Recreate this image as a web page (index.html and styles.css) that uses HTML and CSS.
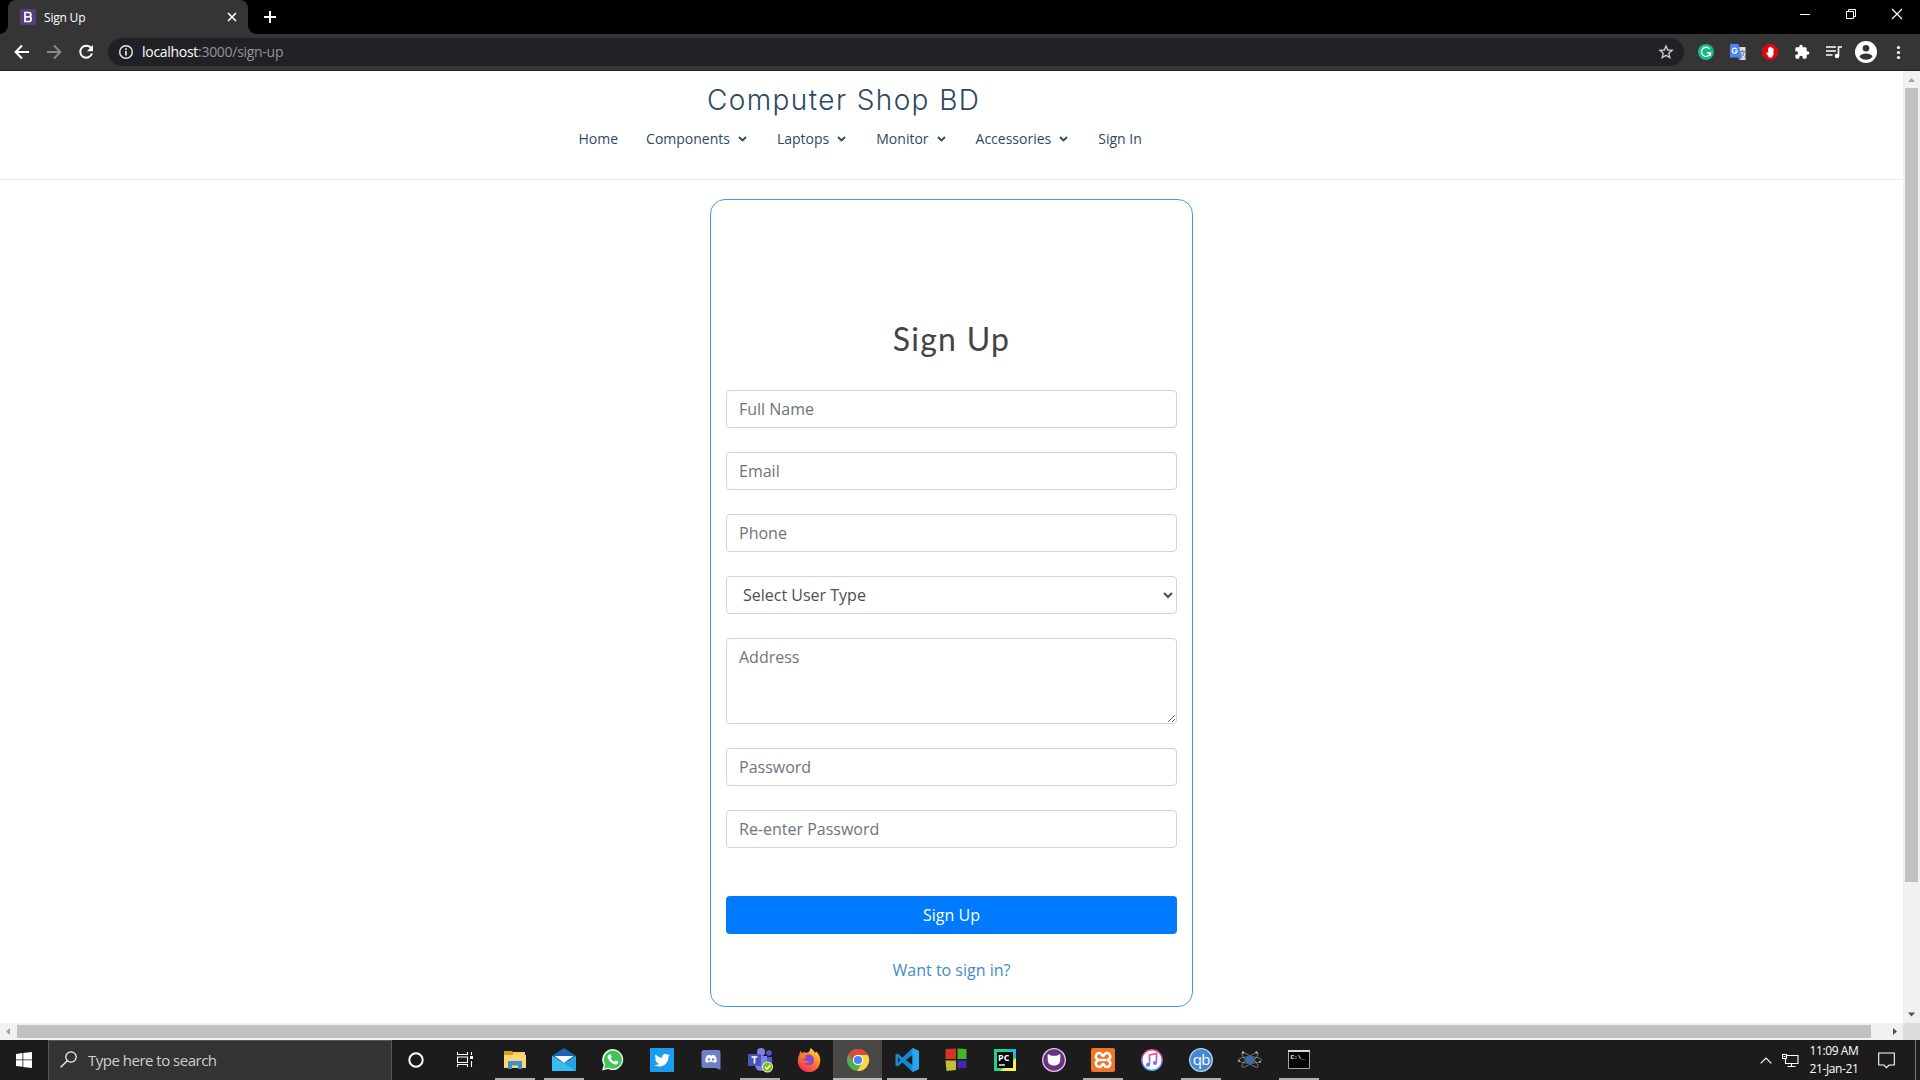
FILE: index.html
```html
<!DOCTYPE html>
<html lang="en">
<head>
<meta charset="utf-8">
<title>Sign Up</title>
<link rel="stylesheet" href="styles.css">
</head>
<body>
<div class="tabstrip">
  <div class="tab">
    <svg class="favicon" width="16" height="16" viewBox="0 0 16 16"><rect width="16" height="16" rx="2" fill="#563d7c"/><path d="M5 3.5h3.6a2.1 2.1 0 0 1 .3 4.2 2.4 2.4 0 0 1-.2 4.8H5zM5 7.8h3.6" fill="none" stroke="#fff" stroke-width="1.7"/></svg>
    <span class="tab-title">Sign Up</span>
    <svg width="10" height="10" viewBox="0 0 10 10"><path d="M1 1l8 8M9 1L1 9" stroke="#fff" stroke-width="1.7"/></svg>
  </div>
  <svg class="newtab" width="12" height="12" viewBox="0 0 12 12"><path d="M6 0v12M0 6h12" stroke="#fff" stroke-width="2"/></svg>
  <div class="window-controls">
    <svg width="46" height="28" viewBox="0 0 46 28"><path d="M18 14.5h10" stroke="#fff"/></svg>
    <svg width="46" height="28" viewBox="0 0 46 28"><path d="M18.500 11.500h7v7h-7zM20.500 11v-1.500h7v7h-1.500" fill="none" stroke="#fff"/></svg>
    <svg width="46" height="28" viewBox="0 0 46 28"><path d="M18 9l10 10M28 9L18 19" stroke="#fff" stroke-width="1.200"/></svg>
  </div>
</div>
<div class="toolbar">
  <div class="nav-buttons">
    <svg width="16" height="16" viewBox="0 0 16 16"><path d="M15 8H2M8 1.500L1.600 8 8 14.500" fill="none" stroke="#fff" stroke-width="2"/></svg>
    <svg width="16" height="16" viewBox="0 0 16 16"><path d="M1 8h13M8 1.500L14.400 8 8 14.500" fill="none" stroke="#898989" stroke-width="2"/></svg>
    <svg width="16" height="16" viewBox="0 0 16 16"><path d="M13.200 4.200A6 6 0 1 0 14 9.500" fill="none" stroke="#fff" stroke-width="2"/><path d="M15 1v6.200H8.800z" fill="#fff"/></svg>
  </div>
  <div class="omnibox">
    <svg width="16" height="16" viewBox="0 0 16 16"><circle cx="8" cy="8" r="6.300" fill="none" stroke="#e8eaed" stroke-width="1.400"/><path d="M8 7v4.500M8 4.300v1.600" stroke="#e8eaed" stroke-width="1.700"/></svg>
    <span class="url"><b>localhost</b>:3000/sign-up</span>
    <svg width="16" height="16" viewBox="0 0 16 16"><path d="M8 2l1.700 4 4.400.400-3.300 2.900 1 4.300L8 11.300l-3.800 2.300 1-4.300L1.900 6.400 6.300 6z" fill="none" stroke="#c8cacd" stroke-width="1.400"/></svg>
  </div>
  <div class="extensions">
    <svg width="16" height="16" viewBox="0 0 16 16"><circle cx="8" cy="8" r="8" fill="#15b98a"/><path d="M11.500 4.800A4.600 4.600 0 1 0 12.500 9H9M12.500 9v3" fill="none" stroke="#fff" stroke-width="1.300"/></svg>
    <svg width="16" height="16" viewBox="0 0 16 16"><path d="M7 3h8.500v13H9z" fill="#dadce0"/><path d="M10 7.500h5M12.500 6v1.500M14 8c-.500 2-2 3.500-3.500 4.500M11.500 9.500l3 3" stroke="#6b7c93" fill="none"/><path d="M0 0h8.500l3.500 13.500H0z" fill="#4a87ee"/><path d="M6.800 5.300A2.500 2.500 0 1 0 7.200 7H5" fill="none" stroke="#fff" stroke-width="1.200"/><path d="M8.500 13.500H12L9.500 16z" fill="#3367d6"/></svg>
    <svg width="16" height="16" viewBox="0 0 16 16"><path d="M4.700 0h6.600L16 4.700v6.600L11.300 16H4.700L0 11.300V4.700z" fill="#dc0714"/><path d="M4.200 9l1-.8 1 .8V3.800h1.300V2.800h1.400v.7h1.300v1h1.300v6l-1.600 3H7z" fill="#fff"/></svg>
    <svg width="16" height="16" viewBox="0 0 24 24"><path d="M20.500 11H19V7a2 2 0 0 0-2-2h-4V3.500a2.500 2.500 0 0 0-5 0V5H4a2 2 0 0 0-2 2v3.800h1.500a2.700 2.700 0 0 1 0 5.400H2V20a2 2 0 0 0 2 2h3.800v-1.500a2.700 2.700 0 0 1 5.400 0V22H17a2 2 0 0 0 2-2v-4h1.500a2.500 2.500 0 0 0 0-5z" fill="#fff"/></svg>
    <svg width="16" height="16" viewBox="0 0 16 16"><path d="M0 3h10M0 7h10M0 11h6.500M12.500 12V3H16" fill="none" stroke="#fff" stroke-width="1.600"/><circle cx="11" cy="12" r="2.300" fill="#fff"/></svg>
    <svg class="profile" width="22" height="22" viewBox="0 0 22 22"><circle cx="11" cy="11" r="11" fill="#fff"/><circle cx="11" cy="7.200" r="3.300" fill="#353535"/><path d="M4.500 15.500c1-2.200 4-3 6.500-3s5.500.8 6.500 3c-1.400 2.100-3.800 3.300-6.500 3.300s-5.100-1.200-6.500-3.300z" fill="#353535"/></svg>
    <svg width="16" height="16" viewBox="0 0 16 16" fill="#fff"><circle cx="8.500" cy="3.500" r="1.600"/><circle cx="8.500" cy="8.500" r="1.600"/><circle cx="8.500" cy="13.500" r="1.600"/></svg>
  </div>
</div>
<div class="viewport">
  <main class="page">
    <header class="site-header">
      <h1 class="logo">Computer Shop BD</h1>
      <nav class="menu">
        <a>Home</a>
        <a class="drop">Components<svg width="9" height="6" viewBox="0 0 9 6"><path d="M1 1l3.500 3.500L8 1"/></svg></a>
        <a class="drop">Laptops<svg width="9" height="6" viewBox="0 0 9 6"><path d="M1 1l3.500 3.500L8 1"/></svg></a>
        <a class="drop">Monitor<svg width="9" height="6" viewBox="0 0 9 6"><path d="M1 1l3.500 3.500L8 1"/></svg></a>
        <a class="drop">Accessories<svg width="9" height="6" viewBox="0 0 9 6"><path d="M1 1l3.500 3.500L8 1"/></svg></a>
        <a>Sign In</a>
      </nav>
    </header>
    <form class="card">
      <h2>Sign Up</h2>
      <input class="field" placeholder="Full Name">
      <input class="field" placeholder="Email">
      <input class="field" placeholder="Phone">
      <select class="field"><option>Select User Type</option></select>
      <textarea class="field area" placeholder="Address"></textarea>
      <input class="field" type="password" placeholder="Password">
      <input class="field" type="password" placeholder="Re-enter Password">
      <button class="submit" type="button">Sign Up</button>
      <a class="signin">Want to sign in?</a>
    </form>
  </main>
  <div class="vscroll">
    <svg width="17" height="17" viewBox="0 0 17 17"><path d="M5 11l3.500-4L12 11z" fill="#a3a3a3"/></svg>
    <div class="vthumb"></div>
    <svg width="17" height="17" viewBox="0 0 17 17"><path d="M5 6.500h7l-3.500 4z" fill="#505050"/></svg>
  </div>
</div>
<div class="hscroll">
  <svg width="17" height="17" viewBox="0 0 17 17"><path d="M10 5v7L6 8.500z" fill="#a3a3a3"/></svg>
  <div class="hthumb"></div>
  <svg width="17" height="17" viewBox="0 0 17 17"><path d="M7 5v7l4-3.500z" fill="#505050"/></svg>
  <div class="corner"></div>
</div>
<div class="taskbar">
  <div class="start"><svg width="16" height="16" viewBox="0 0 16 16" fill="#fff"><path d="M0 2l6.500-.9v6.400H0zM7.300 1L16 0v7.500H7.300zM0 8.300h6.500v6.500L0 14zM7.300 8.300H16V16l-8.700-1.100z"/></svg></div>
  <div class="search">
    <svg width="17" height="17" viewBox="0 0 17 17"><circle cx="11" cy="6" r="5.200" fill="none" stroke="#fff" stroke-width="1.200"/><path d="M7.300 9.700L.6 16.400" stroke="#fff" stroke-width="1.300"/></svg>
    <span>Type here to search</span>
  </div>
  <div class="apps">
    <div class="app shell"><svg width="24" height="24" viewBox="0 0 24 24"><circle cx="12" cy="12" r="6.700" fill="none" stroke="#fff" stroke-width="2"/></svg></div>
    <div class="app shell"><svg width="24" height="24" viewBox="0 0 24 24"><path d="M4.500 4v2.500h10V4M4.500 19v-2.500h10V19M4.500 9h10v5.500h-10zM18.500 4v3M18.500 13v6" fill="none" stroke="#fff" stroke-width="1.100"/><path d="M17 8h3v3h-3z" fill="#fff"/></svg></div>
    <div class="app run"><svg width="24" height="24" viewBox="0 0 24 24"><path d="M1 3h8l2 2h11v4H1z" fill="#d99e1e"/><path d="M10 4h12v3H10z" fill="#f6cd62"/><path d="M1 7h22v13H1z" fill="#fbd875"/><path d="M5 21v-8h14v8h-4v-3.500H9V21z" fill="#3d8fd1"/></svg></div>
    <div class="app run"><svg width="24" height="24" viewBox="0 0 24 24"><path d="M0 8L12 0l12 8v3H0z" fill="#1765ad"/><path d="M0 8l12 7 12-7v15H0z" fill="#21a5e8"/><path d="M0 23V8l24 15z" fill="#38bdf2"/><path d="M2.500 8h19L12 15z" fill="#f7fbfd"/></svg></div>
    <div class="app"><svg width="24" height="24" viewBox="0 0 24 24"><path d="M1 22.500l1.700-5.500A10.500 10.500 0 1 1 7 21z" fill="#f1f5f2"/><path d="M3.200 20.500l1.100-4A9 9 0 1 1 7.500 19.500z" fill="#42c456"/><path d="M8 6.500l1.500-.3 1.200 2.800-1 1.400c1 1.700 2 2.600 3.700 3.400l1.300-1.300 2.700 1.300c-.1 2.200-1.700 3-3.400 2.600-4-1.200-6-3.400-7.200-6.300-.4-1.400.1-2.700 1.200-3.600z" fill="#fff"/></svg></div>
    <div class="app"><svg width="24" height="24" viewBox="0 0 24 24"><path d="M0 0h24v24H0z" fill="#1c9cee"/><path d="M20 7.300a6 6 0 0 1-1.700.5c.6-.4 1-1 1.300-1.600l-1.900.7a3.200 3.200 0 0 0-5.500 2.900C9.500 9.700 7.300 8.500 5.600 6.500c-.9 1.600-.4 3.300 1 4.300l-1.500-.4c0 1.600 1.100 2.800 2.600 3.100l-1.500.1c.5 1.300 1.600 2.100 3.100 2.200A6.600 6.600 0 0 1 4.500 17c5.900 3.600 14 .3 13.900-8.200.6-.4 1.100-.9 1.600-1.500z" fill="#fff"/></svg></div>
    <div class="app"><svg width="24" height="24" viewBox="0 0 24 24"><path d="M5 2h14a2.500 2.500 0 0 1 2.500 2.500V22L17 20H5a2.500 2.500 0 0 1-2.500-2.500v-13A2.500 2.500 0 0 1 5 2z" fill="#6f7fc8"/><path d="M8 7.500l2.500-.8.500.8h2l.5-.8 2.500.8c1.300 2 1.800 4 1.700 6.200l-2.700 1.300-.8-1.200H9.800L9 15l-2.700-1.300C6.200 11.500 6.700 9.500 8 7.500z" fill="#fff"/><circle cx="9.900" cy="11.400" r="1.200" fill="#6f7fc8"/><circle cx="14.100" cy="11.400" r="1.200" fill="#6f7fc8"/></svg></div>
    <div class="app run"><svg width="26" height="26" viewBox="0 0 26 26"><circle cx="14" cy="5" r="4" fill="#7b83eb"/><circle cx="22" cy="6" r="2.800" fill="#5059c9"/><path d="M17 10h8v7a4 4 0 0 1-8 2z" fill="#5059c9"/><path d="M8 9h12v9a6 6 0 0 1-12 0z" fill="#7b83eb"/><path d="M1 7h13v12H1z" fill="#4b53bc"/><path d="M4.500 10h6M7.500 10v6.500" stroke="#fff" stroke-width="1.700"/><circle cx="20.500" cy="20" r="5.500" fill="#e8f5d6"/><circle cx="20.500" cy="20" r="4.600" fill="#86b91c"/><path d="M18 20l2 2 3.300-3.800" fill="none" stroke="#fff" stroke-width="1.400"/></svg></div>
    <div class="app"><svg width="24" height="24" viewBox="0 0 24 24"><defs><linearGradient id="fox" x1=".8" y1="0" x2=".2" y2="1"><stop offset="0" stop-color="#ffe43f"/><stop offset=".4" stop-color="#ff8a23"/><stop offset="1" stop-color="#f5245d"/></linearGradient></defs><path d="M2.200 7C2.500 4.500 4 3 4 3l1 2.500C6 4 7.500 4 7.500 4L9 5c3-.5 4-2 4.500-5 2 1 3.500 3 4.500 5l1-1.500c2.500 2 4.500 5 4.200 9.500a11.200 11.200 0 0 1-22.400 0c0-2.500.4-4 1.400-6z" fill="url(#fox)"/><path d="M8 7.500c5-2.500 9 .500 9 5s-6 7-10 2.500c3 1 4-1 6-1-2-2-6 0-7-3.500L9 10z" fill="#8a45d8"/></svg></div>
    <div class="app run active"><svg width="24" height="24" viewBox="0 0 24 24"><circle cx="12" cy="12" r="11" fill="#4caf50"/><path d="M12 12L2.500 6.500A11 11 0 0 1 21.500 6.500z" fill="#de4b3b"/><path d="M12 7h9.800A11 11 0 0 1 11 23l5.300-8.500z" fill="#fdd447"/><path d="M2.500 6.500l5 8.500L12 7z" fill="#de4b3b"/><circle cx="12" cy="12" r="5.200" fill="#fff"/><circle cx="12" cy="12" r="4.100" fill="#4688f1"/></svg></div>
    <div class="app run"><svg width="24" height="24" viewBox="0 0 24 24"><path d="M17.500 0L24 3v18l-6.500 3L7.500 14.500 2.500 18.500.5 17.500V6.500l2-1 5 4zM17.500 7l-6.500 5 6.500 5zM3 9.500v5L5.500 12z" fill="#1787d0" fill-rule="evenodd"/><path d="M17.500 0L24 3v18l-6.500 3z" fill="#28a8ee"/></svg></div>
    <div class="app"><svg width="24" height="24" viewBox="0 0 24 24"><path d="M1.500 1L12 .5v10.500H1.500z" fill="#d83426"/><path d="M13.500 .5L22.500 1v10h-9z" fill="#43b52c"/><path d="M1.500 12.500H12V22l-9.500 1z" fill="#c6bd32"/><path d="M13.500 12.500h9V20l-9 .5z" fill="#4326b2"/></svg></div>
    <div class="app"><svg width="24" height="24" viewBox="0 0 24 24"><path d="M1 1h22v22H1z" fill="#22d18b"/><path d="M14 1h9v11z" fill="#27b8d8"/><path d="M23 10v13H7z" fill="#f5ee55"/><path d="M4 4h16v16H4z" fill="#080808"/><text class="pc" x="5" y="13">PC</text><path d="M6 17h6" stroke="#fff" stroke-width="1.400"/></svg></div>
    <div class="app"><svg width="24" height="24" viewBox="0 0 24 24"><circle cx="12" cy="12" r="11.300" fill="#6c2f83" stroke="#dfcfe4" stroke-width="1.300"/><path d="M6 6l3.500 1.700h5L18 6c.6 1.500.5 3 .2 4 .8 5-2 7.500-6.200 7.500S5 15 5.800 10C5.500 9 5.400 7.500 6 6z" fill="#fff"/></svg></div>
    <div class="app run"><svg width="24" height="24" viewBox="0 0 24 24"><rect width="24" height="24" rx="2" fill="#f27425"/><path d="M9 12C3 12 4 5 8.500 5 11 5 10.500 8 12 8s1-3 3.500-3c4.500 0 5.500 7 0 7 5.500 0 4.500 7 0 7-2.500 0-2-3-3.500-3s-1 3-3.500 3C4 19 3 12 9 12zM9 12h6" fill="none" stroke="#fff" stroke-width="2.600"/></svg></div>
    <div class="app"><svg width="24" height="24" viewBox="0 0 24 24"><defs><linearGradient id="tune" x2="0" y2="1"><stop stop-color="#f24c78"/><stop offset=".55" stop-color="#a45be8"/><stop offset="1" stop-color="#3ec3f2"/></linearGradient></defs><circle cx="12" cy="12" r="10.200" fill="#fff" stroke="url(#tune)" stroke-width="1.400"/><path d="M9.500 16.500V7l7-1.500v9" fill="none" stroke="url(#tune)" stroke-width="1.700"/><circle cx="8" cy="16.800" r="2" fill="#7867ed"/><circle cx="15" cy="15" r="2" fill="#a45be8"/></svg></div>
    <div class="app run"><svg width="24" height="24" viewBox="0 0 24 24"><circle cx="12" cy="12" r="11.300" fill="#4786d2" stroke="#b5d2f0" stroke-width="1.300"/><text class="qb" x="3.700" y="16.500">qb</text></svg></div>
    <div class="app"><svg width="24" height="24" viewBox="0 0 24 24"><g fill="none" stroke="#8b907f" stroke-width=".8"><ellipse cx="12" cy="12" rx="11.500" ry="3.200"/><ellipse cx="12" cy="12" rx="10.500" ry="3" transform="rotate(42 12 12)"/><ellipse cx="12" cy="12" rx="10.500" ry="3" transform="rotate(-42 12 12)"/></g><ellipse cx="12" cy="12" rx="4.800" ry="4" fill="#3e69ad"/><g fill="#b9b58d"><circle cx="5" cy="4.500" r="1.200"/><circle cx="18.500" cy="4.500" r="1.200"/><circle cx="1" cy="13" r="1"/><circle cx="22" cy="14" r="1"/></g></svg></div>
    <div class="app run"><svg width="24" height="24" viewBox="0 0 24 24"><path d="M1.500 2.500h21v18h-21z" fill="#050505" stroke="#a6a6a6"/><path d="M1 2h22v2H1z" fill="#d8d8d8"/><text class="cmd" x="3.500" y="11">C:\_</text></svg></div>
  </div>
  <div class="tray">
    <svg width="12" height="7" viewBox="0 0 12 7"><path d="M.7 6.300L6 1l5.300 5.300" fill="none" stroke="#fff" stroke-width="1.200"/></svg>
    <svg width="17" height="15" viewBox="0 0 17 15"><path d="M5 2.500h11v8H3.500V6M9.500 10.500v3M5.500 13.500h8M.5 1.500h4v4h-4zM1.500 3.500h2" fill="none" stroke="#fff" stroke-width="1.100"/></svg>
    <div class="clock"><span class="time">11:09 AM</span><span>21-Jan-21</span></div>
    <svg width="17" height="17" viewBox="0 0 17 17"><path d="M.7 1h15.600v12h-5.200L8.500 15.600 6 13H.7z" fill="none" stroke="#fff" stroke-width="1.100"/></svg>
    <div class="peek"></div>
  </div>
</div>
</body>
</html>
```
FILE: styles.css
```css
* { box-sizing: border-box; }
body {
  margin: 0;
  width: 1920px;
  height: 1080px;
  overflow: hidden;
  display: flex;
  flex-direction: column;
  background: #fff;
  font-family: "Open Sans", sans-serif;
}
svg { display: block; flex: none; }

/* Browser chrome */
.tabstrip { height: 34px; flex: none; display: flex; align-items: flex-start; background: #000; padding-left: 8px; }
.tab {
  position: relative;
  width: 240px;
  height: 34px;
  display: flex;
  align-items: center;
  padding: 0 11px 0 12px;
  background: #353535;
  border-radius: 8px 8px 0 0;
  color: #fff;
  font-size: 12px;
}
.tab::before, .tab::after { content: ""; position: absolute; bottom: 0; width: 8px; height: 8px; }
.tab::before { left: -8px; background: radial-gradient(circle at 0 0, #000 7.5px, #353535 8px); }
.tab::after { right: -8px; background: radial-gradient(circle at 100% 0, #000 7.5px, #353535 8px); }
.tab-title { flex: 1; margin-left: 8px; letter-spacing: -0.2px; }
.newtab { margin: 11px 0 0 16px; }
.window-controls { display: flex; margin-left: auto; }
.toolbar { height: 37px; flex: none; display: flex; align-items: center; background: #353535; border-bottom: 1px solid #232126; }
.nav-buttons { display: flex; gap: 16px; width: 108px; padding-left: 14px; }
.omnibox {
  width: 1576px;
  height: 28px;
  display: flex;
  align-items: center;
  padding: 0 10px;
  border-radius: 14px;
  background: #202124;
}
.url { flex: 1; margin-left: 8px; font-size: 14px; line-height: 20px; letter-spacing: -0.29px; color: #929598; }
.url b { font-weight: 400; color: #fff; }
.extensions { display: flex; align-items: center; gap: 16px; margin-left: 14px; }
.profile { margin: 0 -3px; }

/* Page */
.viewport { height: 952px; flex: none; display: flex; }
.page { width: 1903px; background: #fff; }
.site-header { height: 109px; border-bottom: 1px solid #ececec; color: #2c4964; }
.logo {
  margin: 0;
  padding: 8px 0 0 707px;
  font: 300 28px/42px Inter, sans-serif;
  letter-spacing: 1.4px;
}
.menu { display: flex; gap: 28px; padding-left: 578.5px; font-size: 14px; line-height: 20px; margin-top: 8px; }
.drop { display: flex; align-items: center; gap: 8px; margin-right: 2px; }
.drop svg { fill: none; stroke: #2c4964; stroke-width: 1.8; }
.card {
  width: 483px;
  height: 808px;
  margin: 19px 0 0 710px;
  padding: 119px 15px 0;
  display: flex;
  flex-direction: column;
  border: 1px solid #38a5d0;
  border-radius: 15px;
}
.card h2 { margin: 0 0 32px; text-align: center; color: #444; font: 400 32px/39px Lato, sans-serif; letter-spacing: 1.3px; }
.field {
  height: 38px;
  flex: none;
  width: 100%;
  margin: 0 0 24px;
  padding: 6px 12px;
  border: 1px solid #ced4da;
  border-radius: 4px;
  background: #fff;
  color: #495057;
  font: 400 16px/24px "Open Sans", sans-serif;
}
.field::placeholder { color: #6c757d; opacity: 1; }
select.field { padding-right: 1px; }
.area { height: 86px; resize: vertical; }
.submit {
  height: 38px;
  margin: 24px 0;
  border: 0;
  border-radius: 4px;
  background: #007bff;
  color: #fff;
  font: 400 16px/24px "Open Sans", sans-serif;
}
.signin { text-align: center; color: #428bca; font-size: 16px; line-height: 24px; }

/* Scrollbars */
.vscroll { width: 17px; background: #f1f1f1; display: flex; flex-direction: column; justify-content: space-between; }
.vthumb { width: 13px; height: 794px; margin: 0 2px auto; background: #c1c1c1; }
.hscroll { height: 17px; flex: none; display: flex; align-items: center; background: #f1f1f1; }
.hthumb { width: 1854px; height: 13px; margin-right: auto; background: #c1c1c1; }
.corner { width: 17px; height: 17px; background: #dcdcdc; }

/* Taskbar */
.taskbar { height: 40px; flex: none; display: flex; background: #1c1c1c; color: #fff; }
.start { width: 48px; display: flex; align-items: center; justify-content: center; }
.search {
  width: 344px;
  display: flex;
  align-items: center;
  gap: 11px;
  padding: 0 0 2px 11px;
  background: #333;
  border: 1px solid #575757;
  border-bottom: 0;
  color: #d0d0d0;
  font-size: 15px;
  letter-spacing: -0.5px;
}
.apps { display: flex; }
.app { width: 49px; height: 40px; display: flex; align-items: center; justify-content: center; }
.shell { padding-right: 2px; }
.run { background: linear-gradient(#b4afaf, #b4afaf) center bottom / 40px 2px no-repeat; }
.active { background: linear-gradient(#bcb8b8, #bcb8b8) center bottom / 49px 2px no-repeat #4a4847; }
.pc { font: 700 9px "Open Sans", sans-serif; fill: #fff; }
.qb { font: 400 15px "Open Sans", sans-serif; fill: #fff; letter-spacing: -0.5px; }
.cmd { font: 700 6px "Liberation Mono", monospace; fill: #fff; }
.tray { margin-left: auto; display: flex; align-items: center; }
.tray > svg + svg { margin-left: 10px; }
.clock { width: 62px; display: flex; flex-direction: column; align-items: center; font-size: 12px; line-height: 18px; letter-spacing: -0.4px; margin: 0 13px 0 4px; }
.peek { height: 40px; border-left: 1px solid #777; width: 5px; margin-left: 20px; }
```
